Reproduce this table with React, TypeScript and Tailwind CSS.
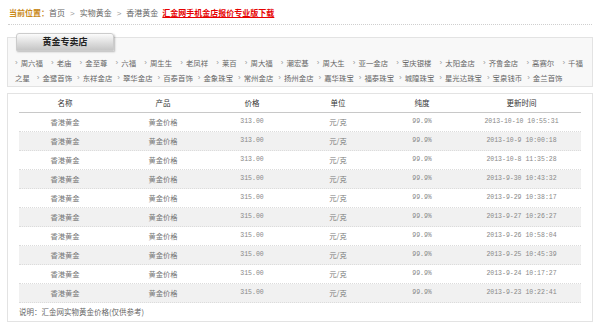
import React from 'react';

const row1 = ['周六福', '老庙', '金至尊', '六福', '周生生', '老凤祥', '莱百', '周大福', '潮宏基', '周大生', '亚一金店', '宝庆银楼', '太阳金店', '齐鲁金店', '高赛尔', '千福'];
const row2 = ['金鹭首饰', '东祥金店', '翠华金店', '百泰首饰', '金象珠宝', '常州金店', '扬州金店', '嘉华珠宝', '福泰珠宝', '城隍珠宝', '星光达珠宝', '宝泉钱币', '金兰首饰'];

const prices = [
  { price: '313.00', time: '2013-10-10 10:55:31' },
  { price: '313.00', time: '2013-10-9 10:00:18' },
  { price: '313.00', time: '2013-10-8 11:35:28' },
  { price: '315.00', time: '2013-9-30 10:43:32' },
  { price: '315.00', time: '2013-9-29 10:38:17' },
  { price: '315.00', time: '2013-9-27 10:26:27' },
  { price: '315.00', time: '2013-9-26 10:58:04' },
  { price: '315.00', time: '2013-9-25 10:45:39' },
  { price: '315.00', time: '2013-9-24 10:17:27' },
  { price: '315.00', time: '2013-9-23 10:22:41' },
];

const cols = 'grid grid-cols-[92px_104px_74px_98px_70px_129px]';

function StoreLink({ name }: { name: string }) {
  return (
    <span className="flex items-center whitespace-nowrap text-[#666]">
      <span className="mr-[3px] font-['Liberation_Sans',sans-serif] text-[8px] text-[#999]">›</span>
      {name}
    </span>
  );
}

export default function App() {
  return (
    <div className="h-[325px] w-[600px] overflow-hidden bg-white font-['Noto_Sans_CJK_SC',sans-serif]">
      {/* breadcrumb */}
      <div className="mx-[8px] h-[25px] border-b border-dotted border-[#cfcfcf] pl-[1px] pt-[8px] text-[8px] leading-[10px] text-[#666]">
        <span className="font-bold text-[#c98a1c]">当前位置：</span>
        <span>首页</span>
        <span className="mx-[5px] font-['Liberation_Sans',sans-serif] text-[#999]">&gt;</span>
        <span>实物黄金</span>
        <span className="mx-[5px] font-['Liberation_Sans',sans-serif] text-[#999]">&gt;</span>
        <span>香港黄金</span>
        <span className="ml-[4px] font-bold text-[#e60000] underline">汇金网手机金店报价专业版下载</span>
      </div>

      {/* stores */}
      <div className="mx-[7px] mt-[12px] h-[50px] border border-[#e3e3e3] bg-[#f8f8f8]">
        <div className="-mt-[5px] ml-[8px] flex h-[18px] w-[98px] items-center justify-center rounded-t-[3px] border border-[#cccccc] bg-gradient-to-b from-[#fbfbfb] to-[#c6c6c6] text-[9px] font-bold text-[#222] shadow-[1px_1px_2px_rgba(0,0,0,0.25)]">
          黄金专卖店
        </div>
        <div className="mt-[4px] px-[7px] text-[7.4px] leading-[15px]">
          <div className="flex justify-between pr-[2px]">
            {row1.map((n) => (
              <StoreLink key={n} name={n} />
            ))}
          </div>
          <div className="flex gap-[5px]">
            <span className="mr-[2px] text-[#666]">之星</span>
            {row2.map((n) => (
              <StoreLink key={n} name={n} />
            ))}
          </div>
        </div>
      </div>

      {/* price table */}
      <div className="mx-[7px] mt-[6px] h-[229px] border border-[#e3e3e3] bg-white px-[11px]">
        <div className={`${cols} h-[19px] items-center border-b border-[#c8c8c8] text-center text-[7.5px] text-[#333]`}>
          <span>名称</span>
          <span>产品</span>
          <span>价格</span>
          <span>单位</span>
          <span>纯度</span>
          <span>更新时间</span>
        </div>
        {prices.map((p, i) => (
          <div
            key={p.time}
            className={`${cols} h-[19px] items-center border-b border-dotted border-[#dcdcdc] text-center text-[7.3px] text-[#777] ${i % 2 === 1 ? 'bg-[#f1f1f1]' : ''}`}
          >
            <span>香港黄金</span>
            <span>黄金价格</span>
            <span className="font-['Liberation_Mono',monospace] text-[6.5px] text-[#888]">{p.price}</span>
            <span>元/克</span>
            <span className="font-['Liberation_Mono',monospace] text-[6.5px] text-[#888]">99.9%</span>
            <span className="font-['Liberation_Mono',monospace] text-[6.5px] text-[#888]">{p.time}</span>
          </div>
        ))}
        <div className="mt-[4px] text-[7.5px] leading-[10px] text-[#666]">说明：汇金网实物黄金价格(仅供参考)</div>
      </div>
    </div>
  );
}
